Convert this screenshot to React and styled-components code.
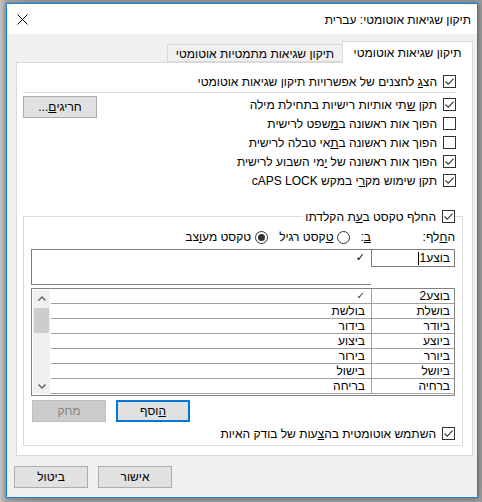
import React from "react";
import styled, { createGlobalStyle } from "styled-components";

const GlobalStyle = createGlobalStyle`
  html, body {
    margin: 0;
    padding: 0;
  }
  body {
    background: #9a9a9a;
    font-family: "Liberation Sans", "DejaVu Sans", sans-serif;
    font-size: 12px;
    color: #000;
  }
`;

const Desktop = styled.div`
  width: 482px;
  height: 502px;
  box-sizing: border-box;
  padding: 3px 4px 4px 6px;
  background: linear-gradient(90deg, #c4c4c4 0, #a8a8a8 6px, #9a9a9a 40px);
`;

const Window = styled.div`
  width: 472px;
  height: 495px;
  box-sizing: border-box;
  border: 1px solid #1883d7;
  background: #f0f0f0;
  direction: rtl;
  display: flex;
  flex-direction: column;
  box-shadow: 0 0 5px rgba(0, 0, 0, 0.35);
`;

const TitleBar = styled.div`
  height: 30px;
  flex: none;
  background: #fff;
  display: flex;
  align-items: center;
  justify-content: space-between;
  padding: 0 6px 0 10px;
`;

const Title = styled.span`
  font-size: 12px;
  padding-top: 1px;
`;

const Body = styled.div`
  flex: 1;
  display: flex;
  flex-direction: column;
  padding: 7px 4px 9px 9px;
`;

const TabRow = styled.div`
  display: flex;
  align-items: flex-end;
  height: 21px;
  position: relative;
  z-index: 1;
`;

const Tab = styled.div`
  box-sizing: border-box;
  width: ${(p) => (p.$active ? "131px" : "175px")};
  height: ${(p) => (p.$active ? "22px" : "18px")};
  margin-bottom: ${(p) => (p.$active ? "-1px" : "0")};
  background: ${(p) => (p.$active ? "#fff" : "#f0f0f0")};
  border: 1px solid #d9d9d9;
  border-bottom: ${(p) => (p.$active ? "none" : "1px solid #d9d9d9")};
  border-right: ${(p) => (p.$active ? "1px solid #d9d9d9" : "none")};
  display: flex;
  align-items: center;
  justify-content: center;
  padding-top: ${(p) => (p.$active ? "0" : "1px")};
`;

const Panel = styled.div`
  height: 394px;
  box-sizing: border-box;
  background: #fff;
  border: 1px solid #d9d9d9;
  padding: 9px 9px 8px 6px;
  display: flex;
  flex-direction: column;
`;

const TopSection = styled.div`
  padding-right: 7px;
  display: flex;
  flex-direction: column;
`;

const CheckRow = styled.label`
  display: flex;
  align-items: center;
  gap: 6px;
  height: 19px;
  white-space: nowrap;
`;

const Box = styled.span`
  width: 13px;
  height: 13px;
  box-sizing: border-box;
  border: 1px solid #333;
  background: #fff;
  flex: none;
  display: flex;
  align-items: center;
  justify-content: center;
`;

const Separator = styled.div`
  height: 1px;
  background: #dcdcdc;
  margin: 1px 0 2px 0;
`;

const OptionsArea = styled.div`
  display: flex;
  justify-content: space-between;
  align-items: flex-start;
`;

const OptionList = styled.div`
  display: flex;
  flex-direction: column;
`;

const Button = styled.div`
  box-sizing: border-box;
  width: ${(p) => p.$w || "74px"};
  height: 22px;
  background: ${(p) => (p.$disabled ? "#cccccc" : "#e1e1e1")};
  border: 1px solid ${(p) => (p.$focus ? "#0078d7" : p.$disabled ? "#bfbfbf" : "#adadad")};
  box-shadow: ${(p) => (p.$focus ? "inset 0 0 0 1px #0078d7" : "none")};
  color: ${(p) => (p.$disabled ? "#838383" : "#000")};
  display: flex;
  align-items: center;
  justify-content: center;
  flex: none;
`;

const ExceptionsButton = styled(Button)`
  margin-top: 1px;
`;

const Group = styled.fieldset`
  margin: 17px 0 0 0;
  padding: 0 7px 2px 7px;
  border: 1px solid #dcdcdc;
  min-width: 0;
`;

const Legend = styled.legend`
  padding: 0 0 0 2px;
  margin: 0;
`;

const ReplaceHeader = styled.div`
  display: flex;
  align-items: center;
  height: 18px;
  margin-top: 2px;
`;

const FieldLabel = styled.span`
  width: ${(p) => p.$w || "auto"};
  flex: none;
`;

const Radio = styled.label`
  display: flex;
  align-items: center;
  gap: 4px;
  margin-right: ${(p) => p.$gap};
  white-space: nowrap;
`;

const RadioCircle = styled.span`
  width: 13px;
  height: 13px;
  box-sizing: border-box;
  border: 1px solid #333;
  border-radius: 50%;
  background: #fff;
  display: flex;
  align-items: center;
  justify-content: center;
  &::after {
    content: "";
    width: 7px;
    height: 7px;
    border-radius: 50%;
    background: ${(p) => (p.$on ? "#333" : "transparent")};
  }
`;

const InputsRow = styled.div`
  display: flex;
  align-items: flex-start;
  margin-top: 3px;
`;

const ReplaceInput = styled.div`
  box-sizing: border-box;
  width: 84px;
  height: 18px;
  border: 1px solid #7a7a7a;
  background: #fff;
  display: flex;
  align-items: center;
  padding: 0 4px;
`;

const Caret = styled.span`
  display: inline-block;
  width: 1px;
  height: 13px;
  background: #000;
`;

const WithInput = styled.div`
  box-sizing: border-box;
  flex: 1;
  height: 36px;
  border: 1px solid #7a7a7a;
  border-right: none;
  background: #fff;
  padding: 1px 6px 0;
  font-family: "DejaVu Sans", sans-serif;
  font-size: 11px;
  line-height: 14px;
`;

const ListBox = styled.div`
  margin-top: 3px;
  height: 108px;
  box-sizing: border-box;
  border: 1px solid #828282;
  display: flex;
  overflow: hidden;
`;

const Rows = styled.div`
  flex: 1;
  display: flex;
  flex-direction: column;
`;

const Row = styled.div`
  display: grid;
  grid-template-columns: 83px 1fr;
  height: 15px;
  box-sizing: border-box;
  border-bottom: 1px solid #a0a0a0;
  flex: none;
`;

const Cell = styled.div`
  display: flex;
  align-items: center;
  padding: 0 ${(p) => (p.$first ? "4px" : "6px")};
  border-left: ${(p) => (p.$first ? "1px solid #a0a0a0" : "none")};
  white-space: nowrap;
  overflow: hidden;
  line-height: 14px;
`;

const Tick = styled.span`
  font-family: "DejaVu Sans", sans-serif;
  font-size: 10px;
  color: #333;
`;

const ScrollBar = styled.div`
  width: 17px;
  flex: none;
  background: #f0f0f0;
  margin: 1px 1px 1px 1px;
  display: flex;
  flex-direction: column;
`;

const Arrow = styled.div`
  height: 16px;
  flex: none;
  display: flex;
  align-items: center;
  justify-content: center;
`;

const Track = styled.div`
  flex: 1;
  display: flex;
  flex-direction: column;
  align-items: center;
`;

const Thumb = styled.div`
  width: 15px;
  height: 25px;
  margin-top: 2px;
  background: #cdcdcd;
`;

const ButtonsRow = styled.div`
  display: flex;
  justify-content: flex-end;
  gap: 10px;
  margin: 4px 0 0 1px;
`;

const SpellRow = styled(CheckRow)`
  margin-top: 2px;
`;

const Footer = styled.div`
  display: flex;
  justify-content: flex-end;
  gap: 10px;
  margin: 10px 0 0 -2px;
`;

const Key = styled.u`
  text-decoration: underline;
`;

function Check({ on }) {
  return (
    <Box>
      {on && (
        <svg width="11" height="11" viewBox="0 0 11 11">
          <path d="M1.5 5.5 L4.2 8.2 L9.6 2.6" fill="none" stroke="#333" strokeWidth="1.1" />
        </svg>
      )}
    </Box>
  );
}

function Chevron({ up }) {
  return (
    <svg width="8" height="5" viewBox="0 0 8 5">
      <path
        d={up ? "M0.5 4.5 L4 1 L7.5 4.5" : "M0.5 0.5 L4 4 L7.5 0.5"}
        fill="none"
        stroke="#606060"
        strokeWidth="1.4"
      />
    </svg>
  );
}

const entries = [
  ["בוצע2", "✓"],
  ["בושלת", "בולשת"],
  ["ביודר", "בידור"],
  ["ביוצע", "ביצוע"],
  ["ביורר", "בירור"],
  ["ביושל", "בישול"],
  ["ברחיה", "בריחה"],
];

export default function App() {
  return (
    <Desktop>
      <GlobalStyle />
      <Window>
        <TitleBar>
          <Title>תיקון שגיאות אוטומטי: עברית</Title>
          <svg width="11" height="11" viewBox="0 0 11 11">
            <path d="M0.5 0.5 L10.5 10.5 M10.5 0.5 L0.5 10.5" stroke="#000" strokeWidth="1" />
          </svg>
        </TitleBar>
        <Body>
          <TabRow>
            <Tab $active>תיקון שגיאות אוטומטי</Tab>
            <Tab>תיקון שגיאות מתמטיות אוטומטי</Tab>
          </TabRow>
          <Panel>
            <TopSection>
              <CheckRow>
                <Check on />
                <span>
                  הצ<Key>ג</Key> לחצנים של אפשרויות תיקון שגיאות אוטומטי
                </span>
              </CheckRow>
              <Separator />
              <OptionsArea>
                <OptionList>
                  <CheckRow>
                    <Check on />
                    <span>
                      תקן <Key>ש</Key>תי אותיות רישיות בתחילת מילה
                    </span>
                  </CheckRow>
                  <CheckRow>
                    <Check />
                    <span>
                      הפוך אות ראשונה ב<Key>מ</Key>שפט לרישית
                    </span>
                  </CheckRow>
                  <CheckRow>
                    <Check />
                    <span>
                      הפוך אות ראשונה ב<Key>ת</Key>אי טבלה לרישית
                    </span>
                  </CheckRow>
                  <CheckRow>
                    <Check on />
                    <span>
                      הפוך אות ראשונה של <Key>י</Key>מי השבוע לרישית
                    </span>
                  </CheckRow>
                  <CheckRow>
                    <Check on />
                    <span>
                      תקן שימוש מק<Key>ר</Key>י במקש cAPS LOCK
                    </span>
                  </CheckRow>
                </OptionList>
                <ExceptionsButton>
                  חריגי<Key>ם</Key>...
                </ExceptionsButton>
              </OptionsArea>
            </TopSection>
            <Group>
              <Legend>
                <CheckRow>
                  <Check on />
                  <span>
                    החלף טקסט ב<Key>ע</Key>ת הקלדתו
                  </span>
                </CheckRow>
              </Legend>
              <ReplaceHeader>
                <FieldLabel $w="84px">
                  ה<Key>ח</Key>לף:
                </FieldLabel>
                <FieldLabel>
                  <Key>ב</Key>:
                </FieldLabel>
                <Radio $gap="10px">
                  <RadioCircle />
                  <span>
                    <Key>ט</Key>קסט רגיל
                  </span>
                </Radio>
                <Radio $gap="11px">
                  <RadioCircle $on />
                  <span>
                    טקסט מע<Key>ו</Key>צב
                  </span>
                </Radio>
              </ReplaceHeader>
              <InputsRow>
                <ReplaceInput>
                  בוצע1
                  <Caret />
                </ReplaceInput>
                <WithInput>✓</WithInput>
              </InputsRow>
              <ListBox>
                <Rows>
                  {entries.map(([from, to]) => (
                    <Row key={from}>
                      <Cell $first>{from}</Cell>
                      <Cell>{to === "✓" ? <Tick>✓</Tick> : to}</Cell>
                    </Row>
                  ))}
                </Rows>
                <ScrollBar>
                  <Arrow>
                    <Chevron up />
                  </Arrow>
                  <Track>
                    <Thumb />
                  </Track>
                  <Arrow>
                    <Chevron />
                  </Arrow>
                </ScrollBar>
              </ListBox>
              <ButtonsRow>
                <Button $focus>
                  <span>
                    <Key>ה</Key>וסף
                  </span>
                </Button>
                <Button $disabled>מחק</Button>
              </ButtonsRow>
              <SpellRow>
                <Check on />
                <span>
                  השתמש אוטומטית בה<Key>צ</Key>עות של בודק האיות
                </span>
              </SpellRow>
            </Group>
          </Panel>
          <Footer>
            <Button>אישור</Button>
            <Button>ביטול</Button>
          </Footer>
        </Body>
      </Window>
    </Desktop>
  );
}
